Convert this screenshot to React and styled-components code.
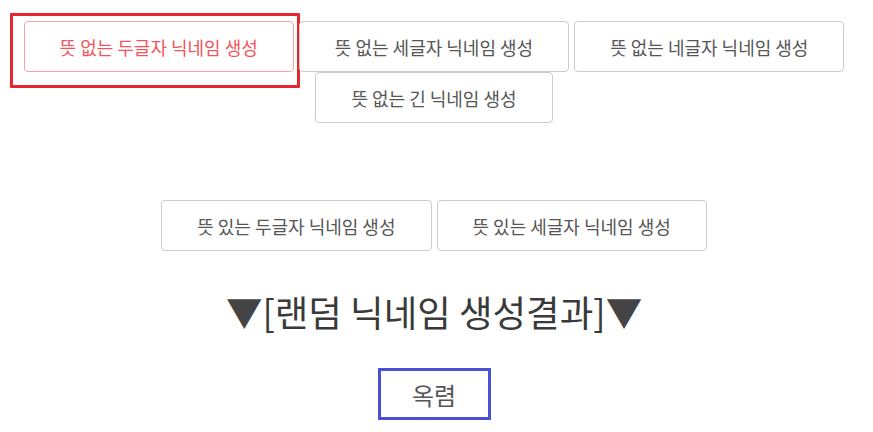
import React, { useState } from 'react'
import styled, { createGlobalStyle } from 'styled-components'

const GlobalStyle = createGlobalStyle`
  body {
    margin: 8px;
    background: #fff;
    font-family: 'Noto Sans CJK KR', 'Noto Sans', sans-serif;
    color: #555;
  }
`

const groups = [
  {
    id: 'meaningless',
    items: [
      '뜻 없는 두글자 닉네임 생성',
      '뜻 없는 세글자 닉네임 생성',
      '뜻 없는 네글자 닉네임 생성',
      '뜻 없는 긴 닉네임 생성',
    ],
  },
  {
    id: 'meaningful',
    items: ['뜻 있는 두글자 닉네임 생성', '뜻 있는 세글자 닉네임 생성'],
  },
]

const App = () => {
  const [active] = useState('뜻 없는 두글자 닉네임 생성')
  return (
    <Wrapper>
      <GlobalStyle />
      {groups.map((group) => (
        <ButtonGroup key={group.id} $spaced={group.id === 'meaningful'}>
          {group.items.map((label) => (
            <NickButton key={label} $active={label === active}>
              {label}
            </NickButton>
          ))}
        </ButtonGroup>
      ))}
      <Title>
        <Arrow>▼</Arrow>[랜덤 닉네임 생성결과]<Arrow>▼</Arrow>
      </Title>
      <ResultRow>
        <Result>옥렴</Result>
      </ResultRow>
    </Wrapper>
  )
}

const Wrapper = styled.main`
  width: 852px;
  padding-top: 13px;
`

const ButtonGroup = styled.div`
  display: flex;
  flex-wrap: wrap;
  justify-content: center;
  column-gap: 5px;
  row-gap: 0;
  margin-top: ${(p) => (p.$spaced ? '77px' : '0')};
`

const NickButton = styled.button`
  position: relative;
  box-sizing: border-box;
  height: 51px;
  padding: 0 35px;
  background: #fff;
  border: 1px solid ${(p) => (p.$active ? '#f7a3a6' : '#cccccc')};
  border-radius: 4px;
  color: ${(p) => (p.$active ? '#f2545b' : '#555555')};
  font-family: inherit;
  font-size: 18px;
  cursor: pointer;
  &::after {
    content: '';
    display: ${(p) => (p.$active ? 'block' : 'none')};
    position: absolute;
    top: -9px;
    left: -15px;
    right: -7px;
    bottom: -17px;
    border: 3px solid #e52530;
    border-radius: 1px;
    pointer-events: none;
  }
`

const Title = styled.h2`
  margin: 39px 0 0;
  text-align: center;
  font-size: 36.5px;
  font-weight: 400;
  line-height: 44px;
  color: #3a3a3a;
`

const Arrow = styled.span`
  color: #444;
`

const ResultRow = styled.div`
  display: flex;
  justify-content: center;
  margin-top: 34px;
`

const Result = styled.div`
  box-sizing: border-box;
  width: 113px;
  height: 52px;
  display: flex;
  align-items: center;
  justify-content: center;
  border: 3px solid #4a50d4;
  font-size: 24px;
  color: #555;
`

export default App
